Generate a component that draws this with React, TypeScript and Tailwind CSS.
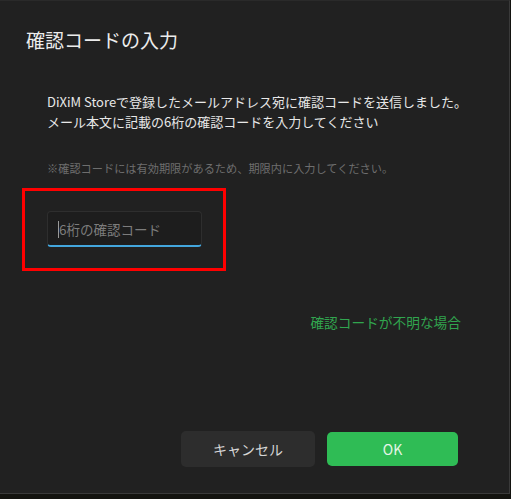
import React from "react";

const font = { fontFamily: '"Noto Sans CJK JP", "Noto Sans", sans-serif' };

const CodeInput = () => {
  return (
    <div className="relative w-[155px] h-[36px]">
      <input
        type="text"
        placeholder="6桁の確認コード"
        className="w-full h-full rounded-[4px] border border-[#2e2e2e] border-b-2 border-b-[#43a6dd] bg-[#1d1d1d] pl-[11px] pr-2 text-[13.5px] text-[#e0e0e0] placeholder:text-[#7c7c7c] outline-none"
        style={font}
      />
      <span className="absolute left-[11px] top-[10px] w-px h-[17px] bg-[#9a9a9a]" />
    </div>
  );
};

export default function App() {
  return (
    <div className="w-[511px] h-[499px] bg-[#13130f] overflow-hidden" style={font}>
      <div className="w-[510px] h-[494px] bg-[#212121] border-t border-t-[#2a2a2a] border-r border-b border-[#3a3a3a] flex flex-col">
        <h1 className="mt-[25px] ml-[26px] text-[19px] leading-[28px] text-[#ececec] font-normal">
          確認コードの入力
        </h1>

        <div className="flex flex-col pl-[22px] pr-[48px]">
          <p className="mt-[38px] ml-[25px] text-[13px] leading-[20px] text-[#e8e8e8] whitespace-nowrap">
            DiXiM Storeで登録したメールアドレス宛に確認コードを送信しました。
            <br />
            メール本文に記載の6桁の確認コードを入力してください
          </p>

          <p className="mt-[28px] ml-[25px] text-[11.2px] leading-[16px] text-[#6e6e6e] whitespace-nowrap">
            ※確認コードには有効期限があるため、期限内に入力してください。
          </p>

          <div className="mt-[12px] w-[204px] h-[83px] border-[3px] border-[#ff0000] pl-[22px] pt-[20px]">
            <CodeInput />
          </div>

          <div className="mt-[41px] flex justify-end">
            <a href="#" className="text-[13.7px] leading-[20px] text-[#31a54f]">
              確認コードが不明な場合
            </a>
          </div>
        </div>

        <div className="mt-[99px] flex items-center justify-end gap-[12px] pr-[51px]">
          <button className="w-[134px] h-[36px] rounded-[5px] bg-[#2d2d2d] text-[14px] text-[#d6d6d6]">
            キャンセル
          </button>
          <button className="w-[131px] h-[34px] rounded-[5px] bg-[#2fbc55] text-[14px] text-[#e4f5e6]">
            OK
          </button>
        </div>
      </div>
    </div>
  );
}
